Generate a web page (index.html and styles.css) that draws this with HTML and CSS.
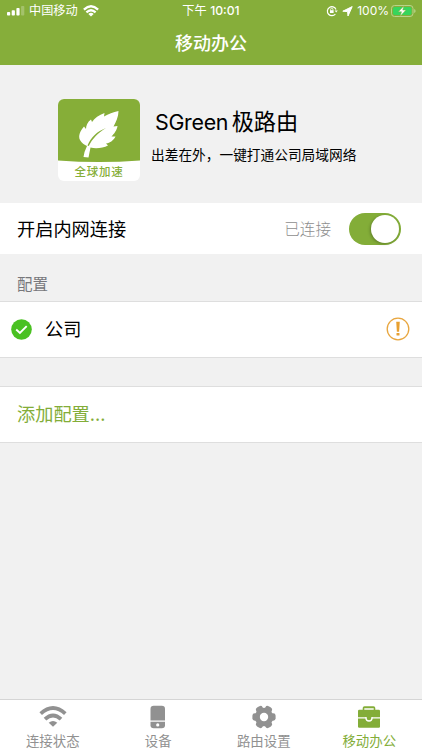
FILE: index.html
```html
<!DOCTYPE html>
<html lang="zh-CN">
<head>
<meta charset="utf-8">
<title>移动办公</title>
<link rel="stylesheet" href="styles.css">
</head>
<body>
<div class="app">
  <header class="header">
    <div class="status">
      <div class="status-left">
        <svg class="signal" width="18" height="10" viewBox="0 0 18 10" fill="#fff"><rect x="0" y="6" width="3.2" height="3.6" rx=".8"/><rect x="4.7" y="4.2" width="3.2" height="5.4" rx=".8"/><rect x="9.4" y="2" width="3.2" height="7.6" rx=".8"/><rect x="14.1" y="0" width="3.2" height="9.6" rx=".8" opacity=".25"/></svg>
        <span class="carrier">中国移动</span>
        <svg width="16" height="12" viewBox="0 0 16 12" fill="none" stroke="#fff" stroke-width="2.3"><path d="M.9 4.6Q8-2.1 15.1 4.6M3.4 7.4Q8 3.1 12.6 7.4"/><path d="M5.3 9Q8 6.6 10.7 9L8 11.6Z" fill="#fff" stroke="none"/></svg>
      </div>
      <div class="time">下午 <b>10:01</b></div>
      <div class="status-right">
        <svg width="12" height="12" viewBox="0 0 12 12" fill="none" stroke="#fff"><path d="M9.4 9A4.500 4.500 0 1 1 10 4.400" stroke-width="1.200"/><path d="M8.600 5.400h3.200L10.200 7.600Z" fill="#fff" stroke="none"/><rect x="4" y="5.200" width="3.600" height="2.800" fill="#fff" stroke="none"/><path d="M4.700 5.300V4.200a1.100 1.100 0 0 1 2.200 0v1.100" stroke-width=".8"/></svg>
        <svg class="arrow" width="11" height="11" viewBox="0 0 11 11" fill="#fff"><path d="M10.200.6 6 10 5.600 5.600.8 5.200Z" stroke="#fff" stroke-width="1" stroke-linejoin="round"/></svg>
        <span class="percent">100%</span>
        <svg class="battery" width="25" height="12" viewBox="0 0 25 12"><rect x=".5" y=".5" width="21.500" height="11" rx="3" fill="none" stroke="#b9d48c"/><rect x="2" y="2" width="18.500" height="8" rx="1.700" fill="#37d55c"/><path d="M23.200 4v4q1.400-.6 1.400-2T23.200 4Z" fill="#b9d48c"/><path d="M12.800.9 7.300 6.800h3.200l-1.300 4.400 5.800-6.100h-3.200Z" fill="#fff" stroke="#86ae3a" stroke-width=".5"/></svg>
      </div>
    </div>
    <h1 class="title">移动办公</h1>
  </header>

  <main class="content">
    <section class="hero">
      <div class="logo">
        <svg class="leaf" width="82" height="63" viewBox="0 0 82 63"><path d="M0 0H82V61.5Q41 64.5 0 61.5Z" fill="#86ae38"/><path d="M60.500 12C55 13 50.500 15 46 17.500L46.500 14C41 16 36.500 19 34 23L33 20.500C29.500 23 28 26.500 28 30L26 27.500C22 32 20 37 22 41C23.500 44 26.500 46 29 47Q26 53 25.500 58L30.500 58.500L32.500 48.500C38 50 45 49 50 46.500L48 44.500C52 44 56 41 57.500 37.500L53.500 37.500C56 35 59 31 59.500 27L55.500 27.500C58 23 60.500 18 60.500 12Z" fill="#fff"/><path d="M29.500 46.500C33 38 39 32.500 48 29C40.500 33.500 34 40 30.800 47Z" fill="#86ae38"/></svg>
        <span class="logo-text">全球加速</span>
      </div>
      <div class="hero-copy">
        <h2 class="name"><span class="latin">SGreen</span>极路由</h2>
        <p class="slogan">出差在外，一键打通公司局域网络</p>
      </div>
    </section>

    <section class="row row-switch">
      <span class="label">开启内网连接</span>
      <span class="state">已连接</span>
      <span class="switch"><i class="knob"></i></span>
    </section>

    <div class="section-title">配置</div>
    <section class="row lined config">
      <svg width="21" height="21" viewBox="0 0 21 21"><circle cx="10.500" cy="10.500" r="10.300" fill="#4ac122"/><path d="m5.200 10.500 3.700 3.500 6.800-6.900" fill="none" stroke="#fff" stroke-width="1.900"/></svg>
      <span class="label">公司</span>
      <svg class="warn" width="24" height="24" viewBox="0 0 24 24"><circle cx="12" cy="12" r="10.800" fill="none" stroke="#e8a63f" stroke-width="1.300"/><path d="M10.200 4.800h3.600l-.7 10h-2.200Z" fill="#e8a030"/><rect x="10.500" y="16" width="3" height="2.600" rx=".6" fill="#e8a030"/></svg>
    </section>
    <section class="row lined add"><span class="label">添加配置<span class="dots">...</span></span></section>
  </main>

  <nav class="tabs">
    <div class="tab">
      <svg width="28" height="24" viewBox="0 0 28 24" fill="none" stroke="#919191" stroke-width="3.800"><path d="M1.700 8.600Q14-2.400 26.300 8.600M6 14.200Q14 6.800 22 14.200"/><path d="M9.700 17.800Q14 14.200 18.300 17.800L14 21.800Z" fill="#919191" stroke="none"/></svg>
      <span>连接状态</span>
    </div>
    <div class="tab">
      <svg width="16" height="24" viewBox="0 0 16 24" fill="#919191"><path d="M.5 15.500V4Q.5.800 3.700.800H11.800Q15 .800 15 4V15.500Z"/><path d="M.5 16.800H15V20.200Q15 23.200 11.800 23.200H3.700Q.5 23.200 .5 20.200Z"/><circle cx="7.750" cy="19.900" r="1.600" fill="#fff"/></svg>
      <span>设备</span>
    </div>
    <div class="tab">
      <svg width="24" height="24" viewBox="0 0 24 24" fill="#919191"><circle cx="12" cy="12" r="9.200"/><rect x=".4" y="8.300" width="23.200" height="7.400" rx="2.400"/><rect x=".4" y="8.300" width="23.200" height="7.400" rx="2.400" transform="rotate(60 12 12)"/><rect x=".4" y="8.300" width="23.200" height="7.400" rx="2.400" transform="rotate(120 12 12)"/><circle cx="12" cy="12" r="4.200" fill="#fff"/></svg>
      <span>路由设置</span>
    </div>
    <div class="tab active">
      <svg width="24" height="24" viewBox="0 0 24 24" fill="#83ad38"><path d="M5.700 5.500V3Q5.700 1.200 7.500 1.200H16.500Q18.300 1.200 18.300 3V5.500H16.700V3.300H7.300V5.500Z"/><path d="M2.200 4.800H21.800Q23 4.800 23 6V12.200H1V6Q1 4.800 2.200 4.800Z"/><path d="M1 13.400H23V21.500Q23 22.700 21.800 22.700H2.200Q1 22.700 1 21.500Z"/><path d="M8.300 12H15.700V13Q15.700 16.700 12 16.700T8.300 13Z" fill="#fff"/><path d="M9.700 11.500H14.300V13Q14.300 15.300 12 15.300T9.700 13Z"/></svg>
      <span>移动办公</span>
    </div>
  </nav>
</div>
</body>
</html>
```
FILE: styles.css
```css
* { box-sizing: border-box; }
body, h1, h2, p { margin: 0; }
body { background: #f1f1f1; font-family: Inter, "Noto Sans CJK SC", sans-serif; color: #000; }
svg { display: block; flex: none; }
.app { width: 422px; height: 750px; display: flex; flex-direction: column; overflow: hidden; }
.header { height: 65px; background: #86ae3a; color: #fff; flex: none; }
.status { height: 22px; display: grid; grid-template-columns: 1fr auto 1fr; align-items: center; font-size: 12.2px; line-height: 22px; padding: 0 6px 0 7px; }
.status-left, .status-right { display: flex; align-items: center; }
.carrier { margin: 0 5px 0 4px; }
.time { white-space: pre; padding-right: 1px; }
.time b { font-weight: 500; }
.status-right { justify-content: flex-end; }
.arrow { margin-left: 4px; }
.percent { margin: 0 2px 0 4px; font-size: 12px; }
.title { font-size: 18px; line-height: 43px; font-weight: 500; text-align: center; }
.content { flex: 1; }
.hero { height: 138px; padding: 34px 0 0 58px; display: flex; }
.logo { width: 82px; height: 82px; background: #fff; border-radius: 6px; overflow: hidden; flex: none; }
.logo-text { display: block; text-align: center; font-size: 11.5px; line-height: 21px; letter-spacing: .8px; color: #86ae38; font-weight: 500; }
.hero-copy { padding: 7px 0 0 11px; }
.name { font-size: 22.2px; line-height: 32px; font-weight: 400; padding-left: 4px; }
.latin { font-size: 21.4px; letter-spacing: -.3px; margin-right: 3.5px; }
.slogan { font-size: 13.7px; line-height: 20px; margin-top: 7px; white-space: nowrap; }
.row { background: #fff; display: flex; align-items: center; }
.label { font-size: 18.2px; line-height: 28px; }
.row-switch { height: 51px; padding: 0 21px 0 17px; }
.state { margin-left: auto; color: #8e8e8e; font-size: 15.6px; font-weight: 300; padding-bottom: 1px; }
.switch { width: 52px; height: 32px; margin-left: 18px; padding: 2px; border-radius: 16px; background: #83ad38; display: flex; justify-content: flex-end; }
.knob { width: 28px; height: 28px; border-radius: 50%; background: #fff; box-shadow: -1px 1px 3px rgba(0,0,0,.25); }
.section-title { height: 47px; padding: 15px 17px 0; font-size: 15.5px; line-height: 32px; color: #77777b; }
.lined { height: 57px; border-top: 1px solid #dedede; border-bottom: 1px solid #dedede; }
.config { padding: 0 12px 0 11px; }
.config .label { margin-left: 13px; padding-bottom: 1px; }
.warn { margin-left: auto; margin-bottom: 1px; }
.add { margin-top: 28px; padding: 0 0 2px 17px; color: #83ad38; }
.tabs { height: 51px; background: #fff; border-top: 1px solid #d5d5d5; display: grid; grid-template-columns: repeat(4, 1fr); flex: none; }
.tab { display: flex; flex-direction: column; align-items: center; padding-top: 5px; color: #919191; font-size: 13.4px; line-height: 20px; }
.tab span { margin-top: 2px; }
.active { color: #83ad38; }
```
